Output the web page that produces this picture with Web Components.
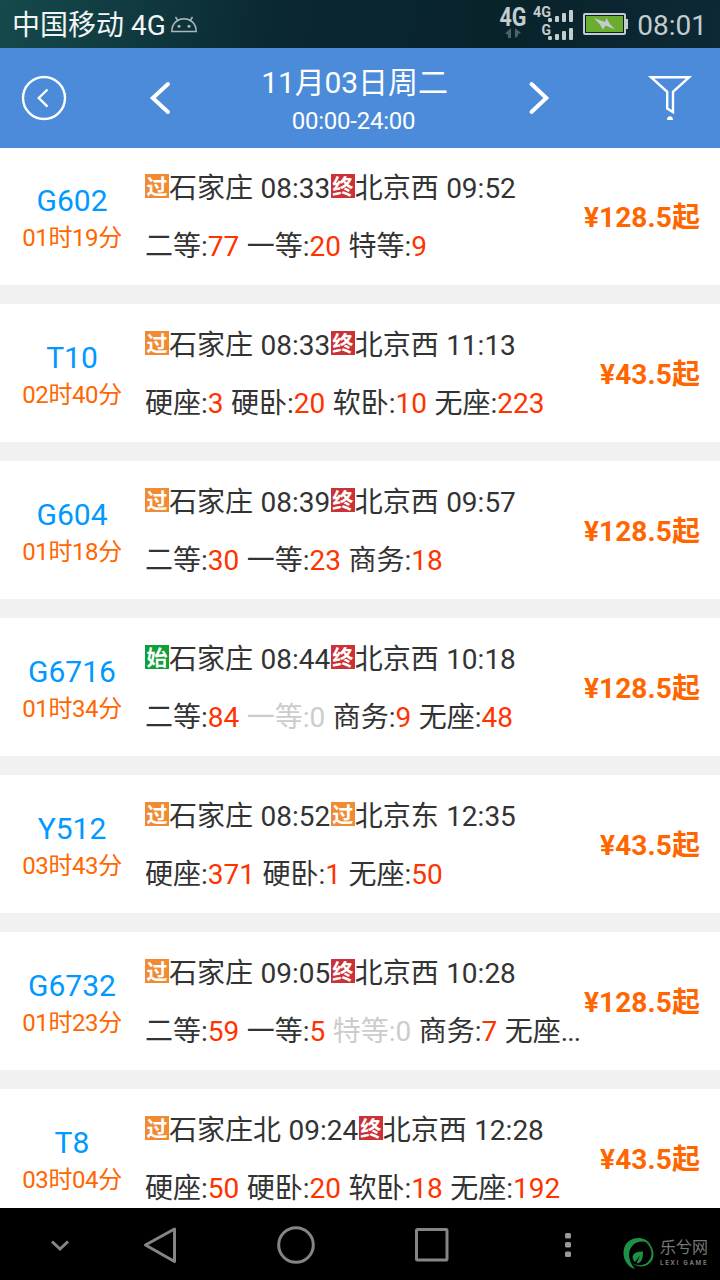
<!DOCTYPE html>
<html lang="zh-CN">
<head>
<meta charset="utf-8">
<title>车次列表</title>
<style>
  body {
    margin: 0;
    font-family: Roboto, "Noto Sans CJK SC", sans-serif;
  }
</style>
</head>
<body>
<train-app></train-app>

<script>
class StatusBar extends HTMLElement {
  constructor() {
    super();
    this.attachShadow({ mode: "open" });
  }

  static get styles() {
    return /*css*/ `
      :host {
        display: flex;
        align-items: center;
        height: 48px;
        flex: none;
        box-sizing: border-box;
        padding: 0 13px 0 12px;
        background: linear-gradient(100deg, #15494c 0, #10393f 20%, #0a2830 38%, #09232b 70%, #0d2935 100%);
        color: #c3cccf;
        font-size: 28px;
        line-height: 48px;
      }
      .carrier { color: #f2f5f5; padding-top: 3px; }
      .droid { margin-left: 4px; }
      .signal { margin-left: auto; }
      .clock { margin-left: 8px; padding-top: 3px; }
      svg { display: block; }
    `;
  }

  connectedCallback() {
    this.shadowRoot.innerHTML = `
      <style>${StatusBar.styles}</style>
      <span class="carrier">中国移动 4G</span>
      <svg class="droid" width="28" height="48" viewBox="170 0 28 48" fill="none" stroke="#a9b9bb" stroke-width="1.5">
        <path d="M171.8 31.4C172 14.5 196 14.5 196.2 31.4Z"/>
        <path d="M175.5 17l2.5 4M192.5 17l-2.5 4"/>
        <g fill="#a9b9bb" stroke="none"><circle cx="179" cy="26.3" r="1.5"/><circle cx="189" cy="26.3" r="1.5"/></g>
      </svg>
      <svg class="signal" width="130" height="48" viewBox="499 0 130 48" fill="#c3cccf">
        <g font-weight="700">
          <text x="499.5" y="26" font-size="25" textLength="27" lengthAdjust="spacingAndGlyphs">4G</text>
          <text x="533" y="17.3" font-size="15.5" textLength="18" lengthAdjust="spacingAndGlyphs">4G</text>
          <text x="541.5" y="34.8" font-size="14.5" textLength="9.5" lengthAdjust="spacingAndGlyphs">G</text>
        </g>
        <path fill="#506168" d="M505 33.5l6-5.500v10h-3v-3.500zM521 33l-6-5v10l3-2v-2z"/>
        <g>
          <rect x="548" y="18" width="4" height="4" rx="1.2"/>
          <rect x="555" y="16" width="4" height="6" rx="1"/>
          <rect x="562" y="13" width="4" height="9" rx="1"/>
          <rect x="569" y="10" width="4" height="12" rx="1"/>
          <rect x="548" y="36" width="4" height="4" rx="1.2"/>
          <rect x="555" y="34" width="4" height="6" rx="1"/>
          <rect x="562" y="31" width="4" height="9" rx="1"/>
          <rect x="569" y="28" width="4" height="12" rx="1"/>
        </g>
        <rect x="584" y="14" width="41" height="20" rx="1" fill="#0a2029" stroke="#c3cccf" stroke-width="2"/>
        <rect x="586" y="16" width="37" height="16" fill="#6aad30"/>
        <path d="M626 19h2v10h-2z"/>
        <path d="M594 18l11 4 1.500-4 3 5.500 5.500 6-9.500-4-2.500 4-3-5z"/>
      </svg>
      <span class="clock">08:01</span>
    `;
  }
}

class DateHeader extends HTMLElement {
  constructor() {
    super();
    this.attachShadow({ mode: "open" });
  }

  static get styles() {
    return /*css*/ `
      :host {
        display: flex;
        height: 100px;
        flex: none;
        box-sizing: border-box;
        padding: 0 28px 0 20px;
        background: #4b8bd9;
        color: #fff;
      }
      svg { display: block; flex: none; fill: none; stroke: #fff; }
      .picker {
        display: flex;
        width: 404px;
        margin-left: 80px;
      }
      .filter { margin-left: auto; }
      .label { flex: 1; text-align: center; padding: 15px 0 0 9px; }
      .day { font-size: 30px; line-height: 40px; height: 40px; letter-spacing: -.1px; }
      .hours { font-size: 24px; line-height: 36px; height: 36px; padding-right: 2px; letter-spacing: -.26px; }
    `;
  }

  connectedCallback() {
    this.shadowRoot.innerHTML = `
      <style>${DateHeader.styles}</style>
      <svg width="48" height="100" viewBox="20 48 48 100" stroke-width="2.4">
        <circle cx="44" cy="98" r="21"/>
        <path d="M47.5 89.5L38.8 98l8.7 8.7"/>
      </svg>
      <div class="picker">
        <svg width="24" height="100" viewBox="148 48 24 100" stroke-width="4" stroke-linecap="round">
          <path d="M168 84L152.8 98l15.2 14"/>
        </svg>
        <div class="label">
          <div class="day"><slot name="day"></slot></div>
          <div class="hours"><slot name="hours"></slot></div>
        </div>
        <svg width="24" height="100" viewBox="528 48 24 100" stroke-width="4" stroke-linecap="round">
          <path d="M531.5 84L546.3 98l-14.8 14"/>
        </svg>
      </div>
      <svg class="filter" width="46" height="100" viewBox="646 48 46 100" stroke-width="2.4">
        <path d="M651 77.2H689.2L673 91.8V112L667.2 108.5V91.8Z"/>
        <path d="M667 120a3 3.8 0 0 1 6 0z" fill="#fff" stroke="none"/>
      </svg>
    `;
  }
}

class StopBadge extends HTMLElement {
  constructor() {
    super();
    this.attachShadow({ mode: "open" });
    this.shadowRoot.innerHTML = `
      <style>
        :host {
          display: inline-flex;
          justify-content: center;
          width: 24px;
          height: 24px;
          vertical-align: 4px;
          background: #f18a32;
          color: #fff;
          font: 700 21px/22px "Noto Sans CJK SC", sans-serif;
        }
        :host([type="end"]) { background: #cc3235; }
        :host([type="start"]) { background: #0e9f37; }
      </style>
      <slot></slot>
    `;
  }
}

class TrainCard extends HTMLElement {
  constructor() {
    super();
    this.attachShadow({ mode: "open" });
    this.shadowRoot.innerHTML = `
      <style>
        :host {
          display: flex;
          height: 138px;
          flex: none;
          box-sizing: border-box;
          background: #fff;
          color: #333;
          white-space: nowrap;
        }
        .train {
          width: 144px;
          text-align: center;
          padding-top: 36px;
        }
        .number { height: 37px; font-size: 30px; line-height: 36px; color: #0099ff; }
        .duration { height: 36px; font-size: 24px; line-height: 36px; letter-spacing: -.4px; color: #ff6600; }
        .detail {
          flex: 1;
          min-width: 0;
          padding: 13px 0 0 1px;
          font-size: 28px;
          word-spacing: .5px;
        }
        .line { height: 58px; line-height: 58px; }
        .price {
          padding: 2px 20px 0 0;
          font-size: 28px;
          font-weight: 700;
          line-height: 138px;
          letter-spacing: .1px;
          color: #ff6600;
        }
      </style>
      <div class="train">
        <div class="number"><slot name="number"></slot></div>
        <div class="duration"><slot name="duration"></slot></div>
      </div>
      <div class="detail">
        <div class="line"><slot name="route"></slot></div>
        <div class="line"><slot name="seats"></slot></div>
      </div>
      <div class="price"><slot name="price"></slot></div>
    `;
  }
}

const trains = [
  { no: "G602", time: "01时19分", from: "过 石家庄 08:33", to: "终 北京西 09:52", seats: "二等:77 一等:20 特等:9", price: "128.5" },
  { no: "T10", time: "02时40分", from: "过 石家庄 08:33", to: "终 北京西 11:13", seats: "硬座:3 硬卧:20 软卧:10 无座:223", price: "43.5" },
  { no: "G604", time: "01时18分", from: "过 石家庄 08:39", to: "终 北京西 09:57", seats: "二等:30 一等:23 商务:18", price: "128.5" },
  { no: "G6716", time: "01时34分", from: "始 石家庄 08:44", to: "终 北京西 10:18", seats: "二等:84 一等:0 商务:9 无座:48", price: "128.5" },
  { no: "Y512", time: "03时43分", from: "过 石家庄 08:52", to: "过 北京东 12:35", seats: "硬座:371 硬卧:1 无座:50", price: "43.5" },
  { no: "G6732", time: "01时23分", from: "过 石家庄 09:05", to: "终 北京西 10:28", seats: "二等:59 一等:5 特等:0 商务:7 无座...", price: "128.5" },
  { no: "T8", time: "03时04分", from: "过 石家庄北 09:24", to: "终 北京西 12:28", seats: "硬座:50 硬卧:20 软卧:18 无座:192", price: "43.5" }
];

const badgeTypes = { "过": "pass", "始": "start", "终": "end" };

class TrainList extends HTMLElement {
  constructor() {
    super();
    this.attachShadow({ mode: "open" });
  }

  stop(text) {
    const [badge, name, time] = text.split(" ");
    return `<stop-badge type="${badgeTypes[badge]}">${badge}</stop-badge>${name} ${time}`;
  }

  seat(text) {
    const [name, count] = text.split(":");
    if (count === undefined) return name.replace("...", `<span class="more">...</span>`);
    if (count === "0") return `<span class="none">${text}</span>`;
    return `${name}:<span class="count">${count}</span>`;
  }

  connectedCallback() {
    this.shadowRoot.innerHTML = `
      <style>
        :host {
          display: flex;
          flex-direction: column;
          gap: 19px;
          flex: 1;
          min-height: 0;
          margin-top: -1px;
          overflow: hidden;
          background: #f1f1f1;
        }
        stop-badge + stop-badge { margin-left: .5px; }
        .count { color: #ff3300; }
        .none { color: #ccc; }
        .more { letter-spacing: -.8px; }
      </style>
      ${trains.map(t => `
        <train-card>
          <span slot="number">${t.no}</span>
          <span slot="duration">${t.time}</span>
          <span slot="route">${this.stop(t.from)}${this.stop(t.to)}</span>
          <span slot="seats">${t.seats.split(" ").map(s => this.seat(s)).join(" ")}</span>
          <span slot="price">¥${t.price}起</span>
        </train-card>`).join("")}
    `;
  }
}

class NavBar extends HTMLElement {
  constructor() {
    super();
    this.attachShadow({ mode: "open" });
  }

  connectedCallback() {
    this.shadowRoot.innerHTML = `
      <style>
        :host {
          display: flex;
          height: 72px;
          flex: none;
          box-sizing: border-box;
          padding-left: 40px;
          background: #000;
        }
        svg { display: block; flex: none; fill: none; stroke: #858585; stroke-width: 3; }
        .back { margin-left: 60px; }
        .home, .recent { margin-left: 94px; }
        .menu { margin-left: 106px; }
        .brand { display: flex; gap: 5px; margin-left: 45px; color: #777; }
        .name { padding-top: 27px; }
        .cn { font-size: 16px; line-height: 25px; height: 25px; }
        .en { font-size: 6.5px; line-height: 7px; font-weight: 700; letter-spacing: 1.7px; white-space: nowrap; }
      </style>
      <svg width="40" height="72" viewBox="40 1208 40 72"><path d="M52 1241.5l8 7.5 8-7.5"/></svg>
      <svg class="back" width="40" height="72" viewBox="140 1208 40 72"><path stroke-linejoin="round" d="M174.500 1229v32.500L145.500 1245z"/></svg>
      <svg class="home" width="44" height="72" viewBox="274 1208 44 72"><circle cx="296" cy="1245" r="17.300"/></svg>
      <svg class="recent" width="40" height="72" viewBox="412 1208 40 72"><rect x="416.500" y="1229.500" width="30.500" height="30.500" rx="1"/></svg>
      <svg class="menu" width="20" height="72" viewBox="558 1208 20 72">
        <g fill="#999" stroke="none">
          <rect x="565" y="1233" width="6" height="5.500" rx="1.500"/>
          <rect x="565" y="1242" width="6" height="5.500" rx="1.500"/>
          <rect x="565" y="1251.500" width="6" height="5.500" rx="1.500"/>
        </g>
      </svg>
      <div class="brand">
        <svg width="32" height="72" viewBox="623 1208 32 72">
          <g fill="#1f9146" stroke="none">
            <path d="M651 1245C645 1235 629 1236 624.500 1247C621 1257 627 1267 635 1269C628 1261 627 1251 633 1245C639 1240 647 1241 651 1245Z"/>
            <path d="M632 1263C639 1269 650 1267 653 1258C655 1251 651 1243 645 1241.500C652 1247 654 1256 648 1262C644 1266 637 1266 632 1263Z"/>
            <path d="M643 1251.500C633 1251 630 1257 635 1262L640 1255.500L636.500 1263.500C642 1263 643 1258 643 1251.500Z"/>
          </g>
        </svg>
        <div class="name">
          <div class="cn">乐兮网</div>
          <div class="en">LEXI GAME</div>
        </div>
      </div>
    `;
  }
}

class TrainApp extends HTMLElement {
  constructor() {
    super();
    this.attachShadow({ mode: "open" });
  }

  connectedCallback() {
    this.shadowRoot.innerHTML = `
      <style>
        :host {
          display: flex;
          flex-direction: column;
          width: 720px;
          height: 1280px;
          overflow: hidden;
        }
        /* the header covers the first pixel row of the list */
        date-header { position: relative; z-index: 1; }
      </style>
      <status-bar></status-bar>
      <date-header>
        <span slot="day">11月03日周二</span>
        <span slot="hours">00:00-24:00</span>
      </date-header>
      <train-list></train-list>
      <nav-bar></nav-bar>
    `;
  }
}

customElements.define("status-bar", StatusBar);
customElements.define("date-header", DateHeader);
customElements.define("stop-badge", StopBadge);
customElements.define("train-card", TrainCard);
customElements.define("train-list", TrainList);
customElements.define("nav-bar", NavBar);
customElements.define("train-app", TrainApp);
</script>
</body>
</html>
